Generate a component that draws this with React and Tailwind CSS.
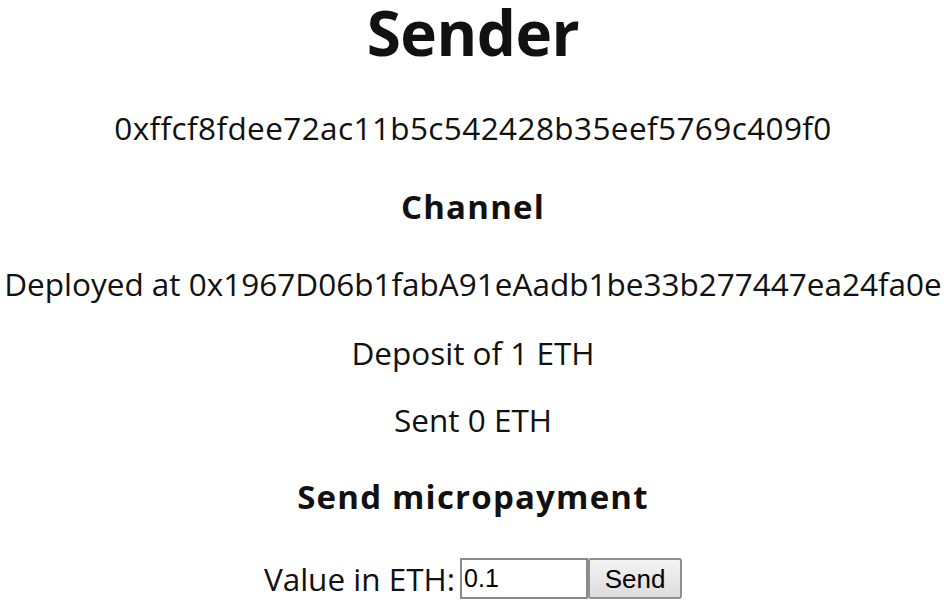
export default function App() {
  return (
    <main className="flex min-h-screen flex-col items-center bg-white text-center text-[#111] [font-family:'Open_Sans','Noto_Sans',sans-serif]">
      <h1 className="text-[62px] font-bold leading-[64px] tracking-[-0.5px]">Sender</h1>
      <p className="mt-[44px] text-[31.5px] leading-[40px] tracking-[0.4px]">
        0xffcf8fdee72ac11b5c542428b35eef5769c409f0
      </p>
      <h3 className="mt-[39px] text-[33px] font-bold leading-[40px] tracking-[1.2px]">Channel</h3>
      <p className="mt-[37px] whitespace-nowrap text-[31.5px] leading-[40px]">
        Deployed at 0x1967D06b1fabA91eAadb1be33b277447ea24fa0e
      </p>
      <p className="mt-[29px] text-[31.5px] leading-[40px]">Deposit of 1 ETH</p>
      <p className="mt-[27px] text-[31.5px] leading-[40px]">Sent 0 ETH</p>
      <h3 className="mt-[37px] text-[33px] font-bold leading-[40px] tracking-[1.2px]">Send micropayment</h3>
      <div className="mt-[41px] flex items-center">
        <label className="mr-[5px] text-[31.5px] leading-[40px]">Value in ETH:</label>
        <input
          defaultValue="0.1"
          className="h-[41px] w-[128px] border-2 border-[#8a8a8a] bg-white px-[2px] text-[25px] text-black outline-none [font-family:'Liberation_Sans',Arial,sans-serif]"
        />
        <button className="h-[41px] w-[94px] rounded-[3px] border-2 border-[#8f8f8f] bg-gradient-to-b from-[#f4f4f4] to-[#dcdcdc] text-[26px] text-black [font-family:'Liberation_Sans',Arial,sans-serif]">
          Send
        </button>
      </div>
    </main>
  )
}
